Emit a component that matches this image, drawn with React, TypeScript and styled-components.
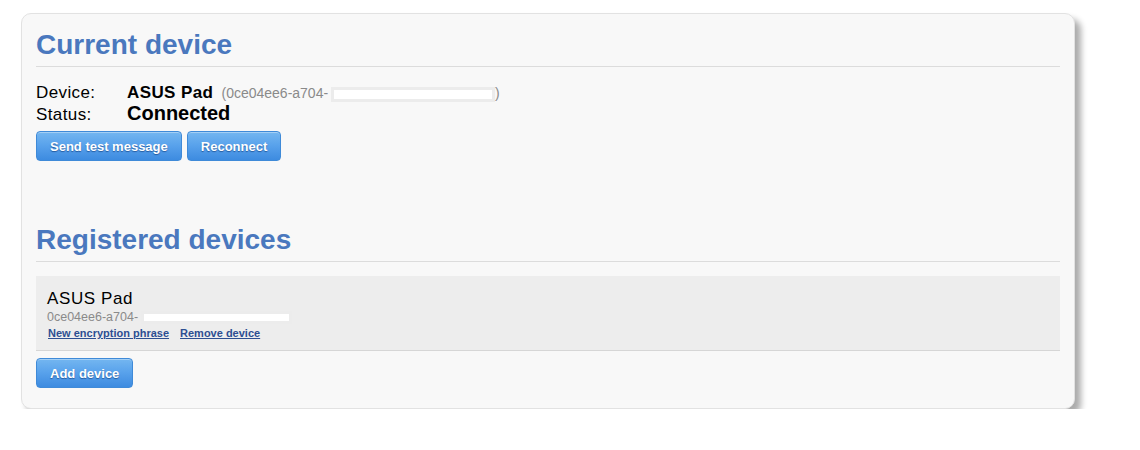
import React from "react";
import styled, { createGlobalStyle } from "styled-components";

const Global = createGlobalStyle`
  html, body { margin: 0; padding: 0; background: #ffffff; }
  body { font-family: "Liberation Sans", Arial, sans-serif; color: #000; }
`;

const Page = styled.div`
  padding: 13px 0 0 21px;
`;

const Card = styled.div`
  box-sizing: border-box;
  width: 1054px;
  background: #f8f8f8;
  border: 1px solid #e2e2e2;
  border-radius: 10px;
  box-shadow: 6px 6px 6px rgba(0, 0, 0, 0.33);
  padding: 15px 14px 20px 14px;
`;

const Section = styled.section<{ $gap?: number }>`
  margin-top: ${(p) => p.$gap ?? 0}px;
`;

const Heading = styled.h2`
  margin: 0;
  font-size: 28px;
  font-weight: bold;
  line-height: 32px;
  color: #4a78be;
  padding-bottom: 5px;
  border-bottom: 1px solid #dcdcdc;
`;

const InfoList = styled.div`
  margin-top: 16px;
  display: grid;
  grid-template-columns: 91px auto;
  grid-auto-rows: 20px;
  align-items: baseline;
`;

const Label = styled.div`
  font-size: 17px;
  line-height: 20px;
  letter-spacing: 0.4px;
`;

const Value = styled.div<{ $big?: boolean }>`
  font-size: ${(p) => (p.$big ? "20px" : "17px")};
  line-height: 20px;
  font-weight: bold;
  white-space: nowrap;
  letter-spacing: ${(p) => (p.$big ? "0" : "0.4px")};
`;

const DeviceId = styled.span`
  font-size: 14px;
  font-weight: normal;
  color: #8a8a8a;
  letter-spacing: 0;
  margin-left: 3px;
`;

const Redacted = styled.span<{ $w: number; $h: number }>`
  display: inline-block;
  width: ${(p) => p.$w}px;
  height: ${(p) => p.$h}px;
  background: #ffffff;
  box-shadow: 0 0 0 3px #ececec;
  margin: 0 3px 0 6px;
  vertical-align: middle;
`;

const ButtonRow = styled.div`
  display: flex;
  gap: 5px;
  margin-top: 8px;
`;

const Button = styled.button`
  box-sizing: border-box;
  height: 30px;
  padding: 0 13px;
  border: 1px solid #3f8ad8;
  border-radius: 4px;
  background: linear-gradient(to bottom, #74b6f0 0%, #5aa3ec 45%, #3d8be0 100%);
  color: #ffffff;
  font-family: "Liberation Sans", Arial, sans-serif;
  font-size: 13px;
  font-weight: bold;
  text-shadow: 0 1px 1px rgba(0, 40, 100, 0.55);
  cursor: pointer;
  box-shadow: inset 0 1px 0 rgba(255, 255, 255, 0.35);
`;

const DeviceBox = styled.div`
  margin-top: 14px;
  background: #ededed;
  border-bottom: 1px solid #d6d6d6;
  padding: 13px 11px 10px 11px;
`;

const DeviceName = styled.div`
  font-size: 17px;
  line-height: 20px;
  letter-spacing: 0.6px;
`;

const DeviceSub = styled.div`
  margin-top: 1px;
  font-size: 12.5px;
  line-height: 14px;
  color: #8a8a8a;
  display: flex;
  align-items: center;
`;

const Links = styled.div`
  display: flex;
  gap: 11px;
  margin-top: 2px;
  padding-left: 1px;
`;

const Link = styled.a`
  font-size: 11px;
  line-height: 14px;
  font-weight: bold;
  color: #2d4f92;
  text-decoration: underline;
  cursor: pointer;
`;

const AddRow = styled.div`
  margin-top: 7px;
  display: flex;
`;

export default function App() {
  return (
    <>
      <Global />
      <Page>
        <Card>
          <Section>
            <Heading>Current device</Heading>
            <InfoList>
              <Label>Device:</Label>
              <Value>
                ASUS Pad <DeviceId>(0ce04ee6-a704-<Redacted $w={158} $h={9} />)</DeviceId>
              </Value>
              <Label>Status:</Label>
              <Value $big>Connected</Value>
            </InfoList>
            <ButtonRow>
              <Button>Send test message</Button>
              <Button>Reconnect</Button>
            </ButtonRow>
          </Section>
          <Section $gap={63}>
            <Heading>Registered devices</Heading>
            <DeviceBox>
              <DeviceName>ASUS Pad</DeviceName>
              <DeviceSub>
                0ce04ee6-a704-<Redacted $w={145} $h={7} />
              </DeviceSub>
              <Links>
                <Link>New encryption phrase</Link>
                <Link>Remove device</Link>
              </Links>
            </DeviceBox>
            <AddRow>
              <Button>Add device</Button>
            </AddRow>
          </Section>
        </Card>
      </Page>
    </>
  );
}
